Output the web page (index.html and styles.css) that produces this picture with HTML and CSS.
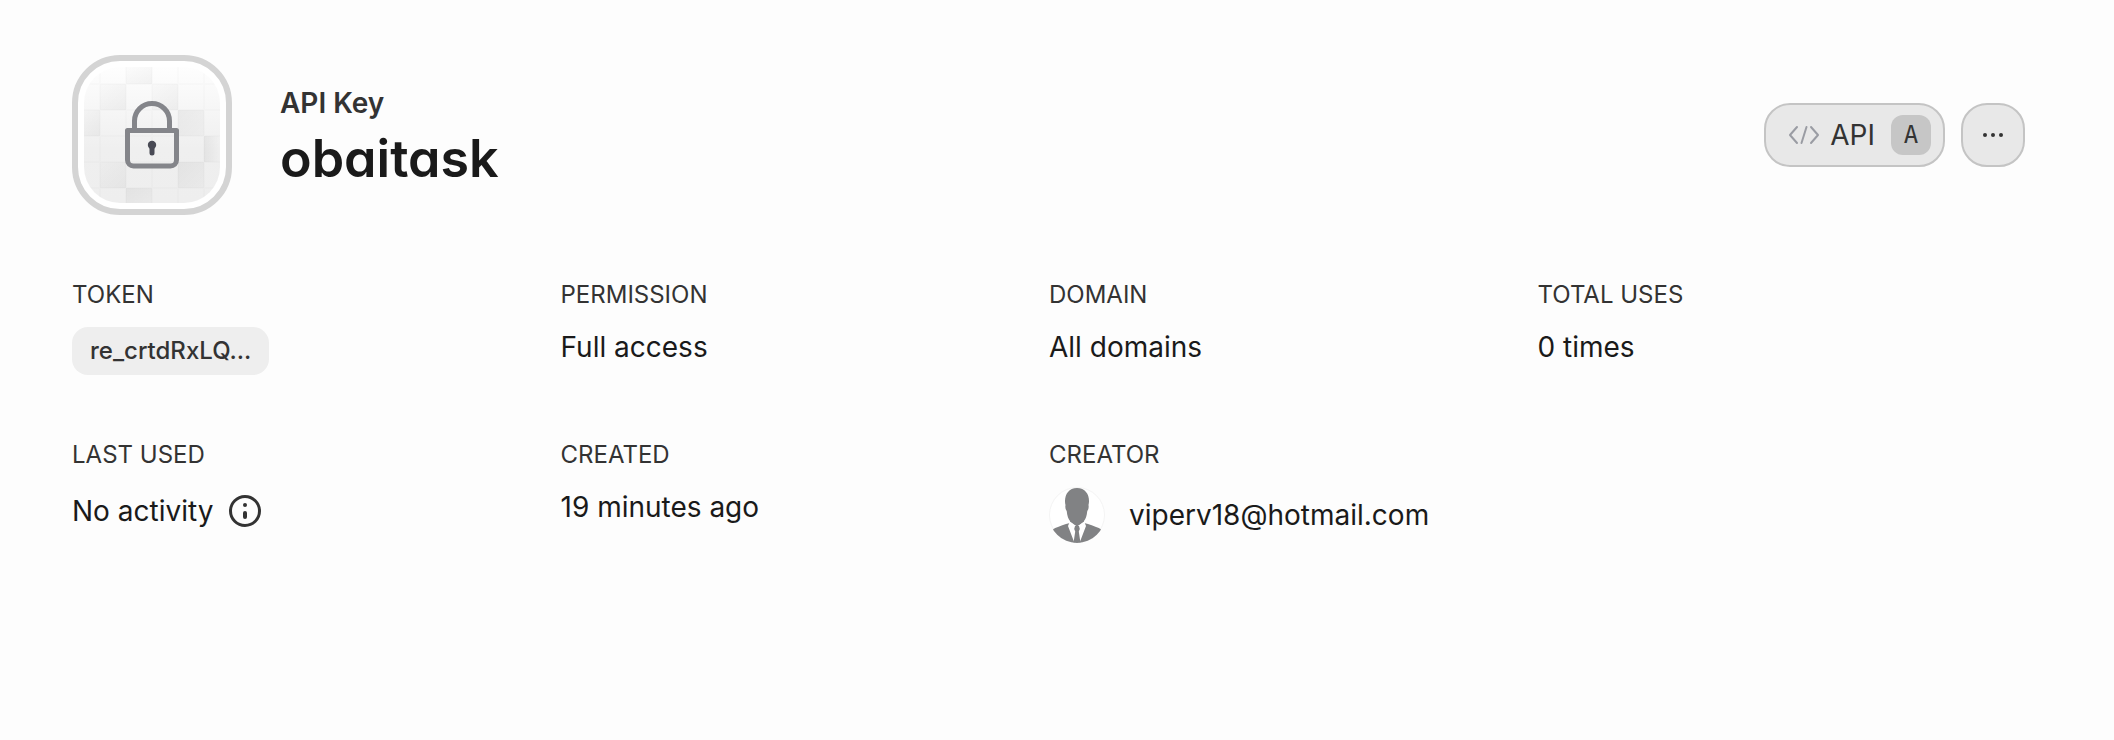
FILE: index.html
```html
<!DOCTYPE html>
<html lang="en">
<head>
<meta charset="utf-8">
<title>API Key - obaitask</title>
<link rel="stylesheet" href="styles.css">
</head>
<body>
<main class="page">
  <header class="header">
    <div class="tile">
      <svg class="tile-art" viewBox="0 0 136 136" aria-hidden="true">
        <defs>
          <linearGradient id="base" x1="0" y1="0" x2="0" y2="1">
            <stop offset="0" stop-color="#fefefe"/>
            <stop offset="0.6" stop-color="#efefef"/>
            <stop offset="1" stop-color="#eeeeee"/>
          </linearGradient>
          <linearGradient id="cell" x1="0" y1="0" x2="1" y2="1">
            <stop offset="0" stop-color="#000" stop-opacity="0.01"/>
            <stop offset="1" stop-color="#000" stop-opacity="0.04"/>
          </linearGradient>
          <linearGradient id="cell-up" x1="1" y1="1" x2="0" y2="0">
            <stop offset="0" stop-color="#000" stop-opacity="0.02"/>
            <stop offset="1" stop-color="#000" stop-opacity="0.05"/>
          </linearGradient>
          <linearGradient id="cell-right" x1="0" y1="0" x2="1" y2="0">
            <stop offset="0" stop-color="#000" stop-opacity="0.05"/>
            <stop offset="1" stop-color="#000" stop-opacity="0"/>
          </linearGradient>
        </defs>
        <rect width="136" height="136" fill="url(#base)"/>
        <g fill="url(#cell)">
          <rect x="42" width="26" height="17"/>
          <rect x="16" y="17" width="26" height="26"/>
          <rect y="43" width="16" height="26"/>
          <rect x="68" y="17" width="26" height="26"/>
          <rect x="16" y="95" width="26" height="26"/>
        </g>
        <g fill="url(#cell-up)">
          <rect x="94" y="43" width="26" height="26"/>
          <rect x="94" y="95" width="26" height="26"/>
          <rect x="42" y="121" width="26" height="15"/>
        </g>
        <rect x="120" y="69" width="16" height="26" fill="url(#cell-right)"/>
        <path d="M16 0V136M42 0V136M68 0V136M94 0V136M120 0V136M0 17H136M0 43H136M0 69H136M0 95H136M0 121H136" stroke="#000" stroke-opacity="0.012" stroke-width="2"/>
        <g fill="none" stroke="#84858a" stroke-width="5" stroke-linejoin="round">
          <path d="M50.500 63V54a17.500 17.500 0 0 1 35 0v9"/>
          <path d="M43.500 63.500h49v29.500a6 6 0 0 1-6 6h-37a6 6 0 0 1-6-6z"/>
        </g>
        <circle cx="68" cy="78" r="4.200" fill="#494a55"/>
        <path d="M68 79v7" stroke="#494a55" stroke-width="5" stroke-linecap="round"/>
      </svg>
    </div>
    <div class="heading">
      <p class="kind">API Key</p>
      <h1 class="name">obaitask</h1>
    </div>
    <div class="actions">
      <button class="button" type="button">
        <svg class="code-icon" viewBox="0 0 32 24" aria-hidden="true">
          <path d="M9 4L2 12l7 8M23 4l7 8-7 8M18.500 4l-5 16" fill="none" stroke="#9a9ca3" stroke-width="2" stroke-linecap="round" stroke-linejoin="round"/>
        </svg>
        <span>API</span>
        <kbd class="key">A</kbd>
      </button>
      <button class="button button-more" type="button" aria-label="More actions">
        <svg class="more-icon" viewBox="0 0 24 8" aria-hidden="true">
          <g fill="#333"><circle cx="4" cy="4" r="2"/><circle cx="12" cy="4" r="2"/><circle cx="20" cy="4" r="2"/></g>
        </svg>
      </button>
    </div>
  </header>

  <dl class="details">
    <div class="detail"><dt>TOKEN</dt><dd><code class="token">re_crtdRxLQ...</code></dd></div>
    <div class="detail"><dt>PERMISSION</dt><dd>Full access</dd></div>
    <div class="detail"><dt>DOMAIN</dt><dd>All domains</dd></div>
    <div class="detail"><dt>TOTAL USES</dt><dd>0 times</dd></div>
    <div class="detail">
      <dt>LAST USED</dt>
      <dd class="with-icon">
        <span>No activity</span>
        <svg class="info-icon" viewBox="0 0 32 32" aria-hidden="true">
          <circle cx="16" cy="16" r="14.500" fill="none" stroke="#333" stroke-width="3"/>
          <circle cx="16" cy="10" r="2" fill="#333"/>
          <path d="M16 18v4" stroke="#333" stroke-width="4" stroke-linecap="round"/>
        </svg>
      </dd>
    </div>
    <div class="detail"><dt>CREATED</dt><dd>19 minutes ago</dd></div>
    <div class="detail">
      <dt>CREATOR</dt>
      <dd class="creator">
        <svg class="avatar" viewBox="0 0 56 56" aria-hidden="true">
          <defs><clipPath id="round"><circle cx="28" cy="28" r="28"/></clipPath></defs>
          <circle cx="28" cy="28" r="27.500" fill="#fff" stroke="#f4f4f4"/>
          <g clip-path="url(#round)">
            <path d="M28 1C20 1 16 7 16 14c0 2 .3 3 .5 4-.6 3 .4 5 1.200 6 .6 5 1.600 8 3.300 10v2L17 37C12 39 7 40 3 43v13h50V43c-4-3-9-4-14-6l-4-1v-2c1.700-2 2.700-5 3.300-10 .8-1 1.800-3 1.200-6 .2-1 .5-2 .5-4C40 7 36 1 28 1z" fill="#818284"/>
            <path d="M21 34l7 5 7-5 2 5-6.500 17h-5L19 39z" fill="#fff"/>
            <path d="M21 30v4.500L28 39.500l7-5V30z" fill="#818284"/>
            <path d="M26 39h4l.8 3-1 2.500 1.700 11.500h-7l1.700-11.500-1-2.500z" fill="#818284"/>
          </g>
        </svg>
        <span>viperv18@hotmail.com</span>
      </dd>
    </div>
  </dl>
</main>
</body>
</html>
```
FILE: styles.css
```css
* {
  box-sizing: border-box;
}

body {
  margin: 0;
  background: #fdfdfd;
  color: #1a1a1a;
  font: 28px/40px Inter, "Liberation Sans", sans-serif;
}

.page {
  padding: 55px 88px 64px 72px;
}

.header {
  display: flex;
  align-items: center;
  gap: 48px;
  padding-right: 1px;
}

.tile {
  flex: none;
  width: 160px;
  height: 160px;
  padding: 6px;
  border: 6px solid #d4d4d4;
  border-radius: 48px;
  background: #fff;
}

.tile-art {
  display: block;
  width: 100%;
  height: 100%;
  border-radius: 36px;
}

.heading {
  flex: 1;
  padding-top: 8px;
}

.kind {
  margin: 0;
  color: #333;
  font-weight: 600;
}

.name {
  margin: 0;
  font-size: 52px;
  line-height: 72px;
  font-weight: 600;
  font-feature-settings: "cv11";
}

.actions {
  display: flex;
  gap: 16px;
}

.button {
  display: flex;
  align-items: center;
  gap: 10px;
  height: 64px;
  padding: 0 12px 0 22px;
  border: 2px solid #c4c4c4;
  border-radius: 26px;
  background: #e8e8e8;
  color: #333;
  font: inherit;
}

.button-more {
  justify-content: center;
  width: 64px;
  padding: 0;
}

.code-icon {
  width: 32px;
  height: 24px;
}

.more-icon {
  width: 24px;
  height: 8px;
}

.key {
  width: 40px;
  height: 40px;
  margin-left: 6px;
  border-radius: 12px;
  background: #c6c6c6;
  font: 24px/40px "DejaVu Sans Mono", monospace;
  text-align: center;
}

.details {
  display: grid;
  grid-template-columns: repeat(4, 1fr);
  row-gap: 64px;
  margin: 64px 0 0;
}

.detail dt {
  margin-bottom: 16px;
  color: #333;
  font-size: 24px;
  line-height: 32px;
}

.detail dd {
  margin: 0;
}

.token {
  display: block;
  width: fit-content;
  padding: 0 18px;
  border-radius: 16px;
  background: #eee;
  color: #333;
  font: 500 24px/48px Inter, "Liberation Sans", sans-serif;
}

.with-icon {
  display: flex;
  align-items: center;
  gap: 16px;
  height: 48px;
}

.info-icon {
  width: 32px;
  height: 32px;
}

.creator {
  display: flex;
  align-items: center;
  gap: 24px;
}

.avatar {
  width: 56px;
  height: 56px;
}
```
